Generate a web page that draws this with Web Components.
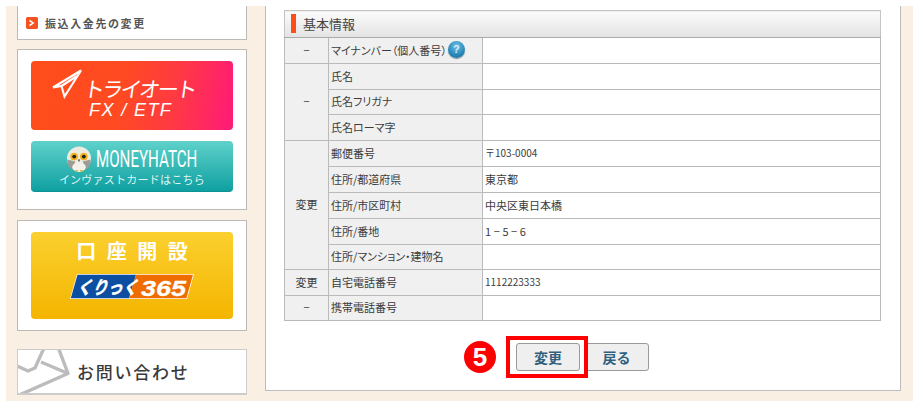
<!DOCTYPE html>
<html lang="ja"><head><meta charset="utf-8"><title>基本情報</title>
<style>
html,body{margin:0;padding:0;background:#fff}
body{font-family:"Noto Sans CJK JP","Liberation Sans",sans-serif;color:#444;width:921px;height:410px;overflow:hidden}
</style></head><body>
<x-page>
  <x-sidebar slot="side"></x-sidebar>
  <x-main slot="main"></x-main>
</x-page>
<script>
const JP='"Noto Sans CJK JP","Liberation Sans",sans-serif';
function def(name,html,setup){
  customElements.define(name,class extends HTMLElement{
    constructor(){super();const r=this.attachShadow({mode:'open'});r.innerHTML=html;if(setup)setup(r,this);}
  });
}
def('x-page',`<style>
:host{display:block;padding:6px 8px 9px 6px}
.wrap{display:flex;gap:18px;height:395px;padding-left:11px;padding-right:12px;background:#f9f0e3;box-sizing:border-box}
</style><div class="wrap"><slot name="side"></slot><slot name="main"></slot></div>`);

def('side-box',`<style>
:host{display:block;box-sizing:border-box;width:230px;background:#fff;border:1px solid #bdb9b4;flex:none}
</style><slot></slot>`);

def('tri-banner',`<style>
:host{display:block;position:relative;height:69px;border-radius:4px;color:#fff;background:linear-gradient(100deg,#ff4d1a 0%,#ff4a22 45%,#ff3a42 70%,#ff1a78 100%);overflow:hidden}
.col{display:flex;flex-direction:column;align-items:flex-start;padding:8px 0 0 20px}
.top{display:flex;align-items:flex-start;gap:1px}
svg{flex:none;display:block}
.t{font:400 21px/28px ${JP};letter-spacing:-2.5px;margin-top:5px;transform:skewX(-8deg);white-space:nowrap}
.f{font:italic 400 18px/17px "Liberation Sans",sans-serif;letter-spacing:1.4px;margin:0 0 0 38px;white-space:nowrap}
</style><div class="col"><div class="top"><svg width="32" height="30" viewBox="0 0 32 30"><path d="M30 1.5 L2 18.5 L10.5 17 L13.5 27.5 Z M26 7 L10.5 17" fill="none" stroke="#fff" stroke-width="2.1" stroke-linejoin="miter"/></svg><span class="t">トライオート</span></div><span class="f">FX / ETF</span></div>`);

def('money-banner',`<style>
:host{display:block;height:51px;margin-top:11px;border-radius:4px;color:#fff;background:linear-gradient(#5fd1ca,#0fa0a1);border-bottom:1px solid #0c9294;box-sizing:border-box;overflow:hidden}
.col{display:flex;flex-direction:column;align-items:center}
.top{display:flex;align-items:center;height:31px;gap:4px;padding-right:2px;box-sizing:border-box;padding-top:5px}
.m{display:inline-block;font:400 24px/26px "Roboto",sans-serif;width:100px;white-space:nowrap;transform:scaleX(.63);transform-origin:0 50%}
.s{font:400 11px/14px ${JP};letter-spacing:.25px;color:#dff5f3;margin-top:0;white-space:nowrap}
svg{display:block;flex:none}
</style><div class="col"><div class="top"><svg width="26" height="26" viewBox="0 0 26 27">
<circle cx="13" cy="13" r="12.5" fill="#ecebe2"/><path d="M1 14q-1 8 6 11l2-9zM25 14q1 8-6 11l-2-9z" fill="#9d9c96"/>
<ellipse cx="13" cy="22" rx="7" ry="5" fill="#f3f2ea"/><path d="M9 25h3v1.5H9zM14 25h3v1.5h-3z" fill="#e9b93c"/>
<circle cx="8" cy="11" r="4" fill="#f3b21a"/><circle cx="18" cy="11" r="4" fill="#f3b21a"/><circle cx="8" cy="11" r="2" fill="#222"/><circle cx="18" cy="11" r="2" fill="#222"/><path d="M12 14h2l-1 3z" fill="#333"/></svg><span class="m">MONEYHATCH</span></div><span class="s">インヴァストカードはこちら</span></div>`);

def('open-banner',`<style>
:host{display:block;height:87px;border-radius:4px;background:linear-gradient(#fbd02f,#f4b500);color:#fff;overflow:hidden}
.col{display:flex;flex-direction:column;align-items:center}
.h{font:700 20px/24px ${JP};letter-spacing:10.5px;padding-left:10.5px;margin-top:7px;white-space:nowrap}
svg{display:block;margin-top:10px}
text{fill:#fff;font-style:italic;font-weight:700}
</style><div class="col"><span class="h">口座開設</span><svg width="126" height="27" viewBox="0 0 126 27">
<polygon points="8,1 125,1 118,26 1,26" fill="#fff"/><polygon points="8.5,1.8 67,1.8 60,25.2 1.8,25.2" fill="#0b4ea2"/><polygon points="67,1.8 124,1.8 117.4,25.2 60,25.2" fill="#ee6c00"/>
<text transform="translate(7,21) skewX(-10) scale(.85,1)" font-size="18" stroke="#fff" stroke-width=".5" style='font-family:${JP}'>くりっく</text>
<text transform="translate(72,22.5) scale(1.2,1)" font-size="22.5" stroke="#fff" stroke-width=".3" style='font-family:"Liberation Sans",sans-serif'>365</text></svg></div>`);

def('x-sidebar',`<style>
:host{display:flex;flex-direction:column;flex:none;width:230px}
.a{height:34px;border-top:0;display:flex;align-items:center;gap:7px;padding-left:8px;box-sizing:border-box;font:700 11px/14px ${JP};letter-spacing:1.6px;color:#555;padding-top:1px}
.i{width:12px;height:12px;border-radius:2px;background:#f4531f;display:block;flex:none}
.b{height:161px;margin-top:9px;padding:11px 13px 0}
.c{height:111px;margin-top:10px;padding:11px 13px 0}
.d{height:46px;margin-top:18px;display:flex;align-items:center;border-color:#ccc;overflow:hidden;border-width:1px 1px 2px;}
.d svg{display:block;flex:none;width:59px;height:44px}
.d span{font:500 17px/24px ${JP};letter-spacing:1.75px;color:#3a3a3a;white-space:nowrap}
</style>
<side-box class="a"><svg class="i" viewBox="0 0 12 12"><rect width="12" height="12" rx="2" fill="#f4531f"/><path d="M3.5 2.5 L8.5 6 L3.5 9.5 V7.6 L6 6 L3.5 4.4Z" fill="#fff"/></svg><span>振込入金先の変更</span></side-box>
<side-box class="b"><tri-banner></tri-banner><money-banner></money-banner></side-box>
<side-box class="c"><open-banner></open-banner></side-box>
<side-box class="d"><svg viewBox="0 0 59 44"><path d="M-1 46 L50 23.5 L40 -3 M-1 16 L10 21 L17 18 L26 -2 M23 12 L50 23.5" fill="none" stroke="#bcbcbc" stroke-width="3.4" stroke-linejoin="round"/></svg><span>お問い合わせ</span></side-box>`);

def('x-button',`<style>
:host{display:inline-flex;align-items:center;justify-content:center;box-sizing:border-box;height:28px;border:1px solid #999;border-radius:3px;background:#efefef;color:#2f5f7f;font:700 14px/20px ${JP};white-space:nowrap}
</style><slot></slot>`);

def('help-icon',`<style>
:host{display:inline-block;width:17px;height:17px;border-radius:50%;background:radial-gradient(circle at 50% 30%,#6cc0e4,#1f7fb3 70%,#1a6a96);box-shadow:0 1px 1px #7a8a94;color:#d8eef8;font:700 11px/17px "Liberation Sans",sans-serif;text-align:center;flex:none}
</style>?`);

const rows=[
 [['−',1],'マイナンバー（個人番号）','',26,1],
 [['−',3],'氏名','',26],
 [null,'氏名フリガナ','',25],
 [null,'氏名ローマ字','',26],
 [['変更',5],'郵便番号','〒103-0004',26,0,1],
 [null,'住所/都道府県','東京都',26],
 [null,'住所/市区町村','中央区東日本橋',26],
 [null,'住所/番地','1−5−6',26,0,2],
 [null,'住所/マンション・建物名','',25],
 [['変更',1],'自宅電話番号','1112223333',26,0,1],
 [['−',1],'携帯電話番号','',25],
];
def('info-table',`<style>
:host{display:block;width:597px}
table{border-collapse:collapse;width:597px;table-layout:fixed;font:400 11px/14px ${JP};color:#3c3c3c}
th.h{height:26px;text-align:left;font:400 13px/18px ${JP};padding:0;border:1px solid #c4c4c4;border-bottom-color:#aaa;background:linear-gradient(#fbfbfb,#e3e3e3);color:#444}
.hd{display:flex;align-items:center;gap:7px;padding-left:6px;padding-bottom:1px}
.bar{width:5px;height:19px;background:#ff4d1a;display:block}
td{border:1px solid #bababa;padding:0 3px 2px;white-space:nowrap;vertical-align:middle}
td.a{background:#f0f0f0;text-align:center;padding:0 0 2px}
td.b{background:#f0f0f0;font-feature-settings:"palt"}
td.c{background:#fff;padding-left:2px}
.lab{display:flex;align-items:center;gap:1px;margin-left:-1px}
.num{font-size:10px}.sp{letter-spacing:2.6px}
</style><table><colgroup><col style="width:44px"><col style="width:154px"><col></colgroup><tbody></tbody></table>`,(r)=>{
  const tb=r.querySelector('tbody');
  let h='<tr><th class="h" colspan="3"><div class="hd"><span class="bar"></span><span>基本情報</span></div></th></tr>';
  for(const [a,b,c,ht,help,kind] of rows){
    h+=`<tr style="height:${ht}px">`;
    if(a)h+=`<td class="a" rowspan="${a[1]}">${a[0]}</td>`;
    h+=`<td class="b"><div class="lab"><span>${b}</span>${help?'<help-icon></help-icon>':''}</div></td>`;
    h+=`<td class="c${kind==1?' num':kind==2?' sp':''}">${c}</td></tr>`;
  }
  tb.innerHTML=h;
});

def('x-main',`<style>
:host{display:block;box-sizing:border-box;width:636px;height:385px;background:#fff;border:1px solid #bcbcbc;border-top:0;padding:4px 0 0 18px;flex:none}
.acts{display:flex;justify-content:center;width:597px;margin-top:22px}
.grp{display:inline-flex;gap:4px;position:relative}
.one{width:64px}.two{width:65px}
.ring{position:absolute;left:-10px;top:-7px;width:82px;height:42px;box-sizing:border-box;border:4px solid #f00;pointer-events:none}
.num{position:absolute;left:-52px;top:-2px;width:32px;height:32px;border-radius:50%;background:#f00;color:#fff;font:700 26px/32px "Liberation Sans",sans-serif;text-align:center}
</style><info-table></info-table><div class="acts"><div class="grp"><x-button class="one">変更</x-button><x-button class="two">戻る</x-button><span class="ring"></span><span class="num">5</span></div></div>`);
</script>
</body></html>
